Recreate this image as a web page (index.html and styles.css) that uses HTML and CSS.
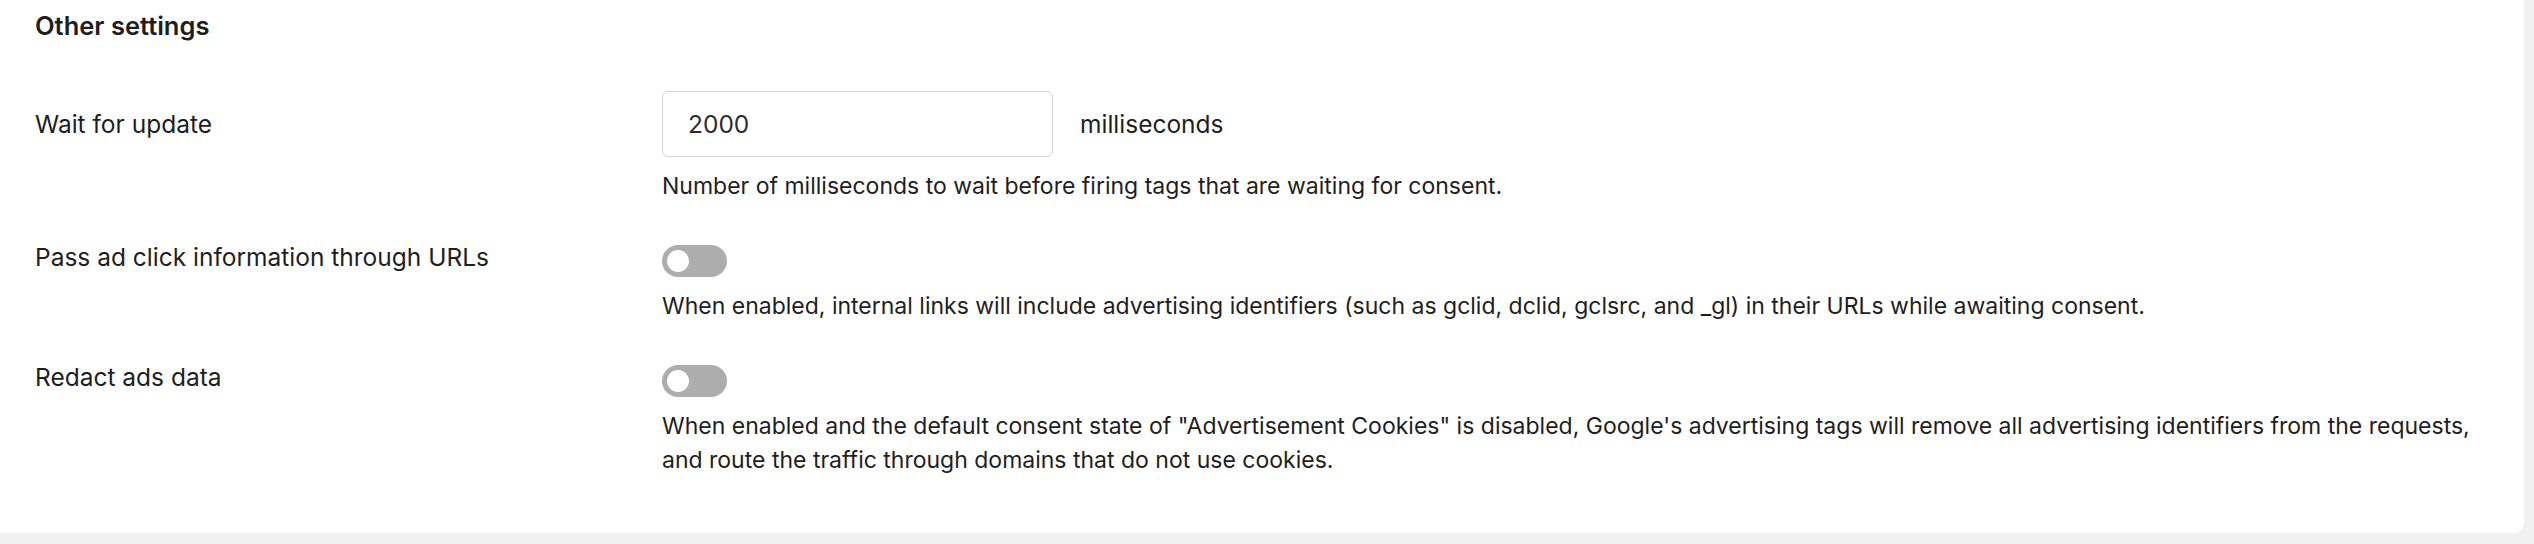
FILE: index.html
```html
<!DOCTYPE html>
<html lang="en">
<head>
  <meta charset="UTF-8">
  <meta name="viewport" content="width=device-width, initial-scale=1.0">
  <title>Other settings</title>
  <link rel="stylesheet" href="styles.css">
</head>
<body>

<section class="settings-card">
  <h2 class="settings-title">Other settings</h2>

  <div class="setting-row">
    <label class="setting-label" for="waitForUpdate">Wait for update</label>
    <div class="setting-control">
      <input type="text" id="waitForUpdate" class="number-input" value="2000">
      <span class="unit">milliseconds</span>
    </div>
    <p class="setting-help">Number of milliseconds to wait before firing tags that are waiting for consent.</p>
  </div>

  <div class="setting-row toggle-row">
    <span class="setting-label">Pass ad click information through URLs</span>
    <div class="setting-control">
      <span class="toggle"><span class="toggle-knob"></span></span>
    </div>
    <p class="setting-help">When enabled, internal links will include advertising identifiers (such as gclid, dclid, gclsrc, and _gl) in their URLs while awaiting consent.</p>
  </div>

  <div class="setting-row toggle-row">
    <span class="setting-label">Redact ads data</span>
    <div class="setting-control">
      <span class="toggle"><span class="toggle-knob"></span></span>
    </div>
    <p class="setting-help">When enabled and the default consent state of "Advertisement Cookies" is disabled, Google's advertising tags will remove all advertising identifiers from the requests, and route the traffic through domains that do not use cookies.</p>
  </div>
</section>

</body>
</html>
```

FILE: styles.css
```css
body {
  margin: 0;
  background: #f0f0f0;
  font-family: Inter, "Noto Sans", sans-serif;
  font-size: 24.5px;
  line-height: 34px;
  color: #1e1e1e;
}

.settings-card {
  width: 2524px;
  box-sizing: border-box;
  height: 533px;
  padding: 9px 45px 0 35px;
  background: #fff;
  border-radius: 0 0 10px 0;
}

.settings-title {
  margin: 0 0 48px;
  font-size: 25.5px;
  line-height: 34px;
  font-weight: 600;
}

.setting-row {
  display: grid;
  grid-template-columns: 627px 1fr;
  align-items: center;
  margin-bottom: 42px;
}

.setting-label {
  grid-column: 1;
  grid-row: 1;
}

.toggle-row .setting-label {
  margin-top: -8px;
}

.setting-control {
  grid-column: 2;
  grid-row: 1;
  display: flex;
  align-items: center;
  gap: 27px;
}

.setting-help {
  grid-column: 2;
  grid-row: 2;
  margin: 12px 0 0;
  font-size: 23px;
}

.number-input {
  width: 391px;
  height: 66px;
  box-sizing: border-box;
  padding: 0 25px;
  border: 1px solid #d6d6d6;
  border-radius: 6px;
  font-family: inherit;
  font-size: 24.5px;
  color: #2c2c2c;
  background: #fff;
}

.toggle {
  position: relative;
  display: block;
  width: 65px;
  height: 32px;
  border-radius: 16px;
  background: #adadad;
}

.toggle-knob {
  position: absolute;
  top: 5px;
  left: 5px;
  width: 22px;
  height: 22px;
  border-radius: 50%;
  background: #fff;
}
```
